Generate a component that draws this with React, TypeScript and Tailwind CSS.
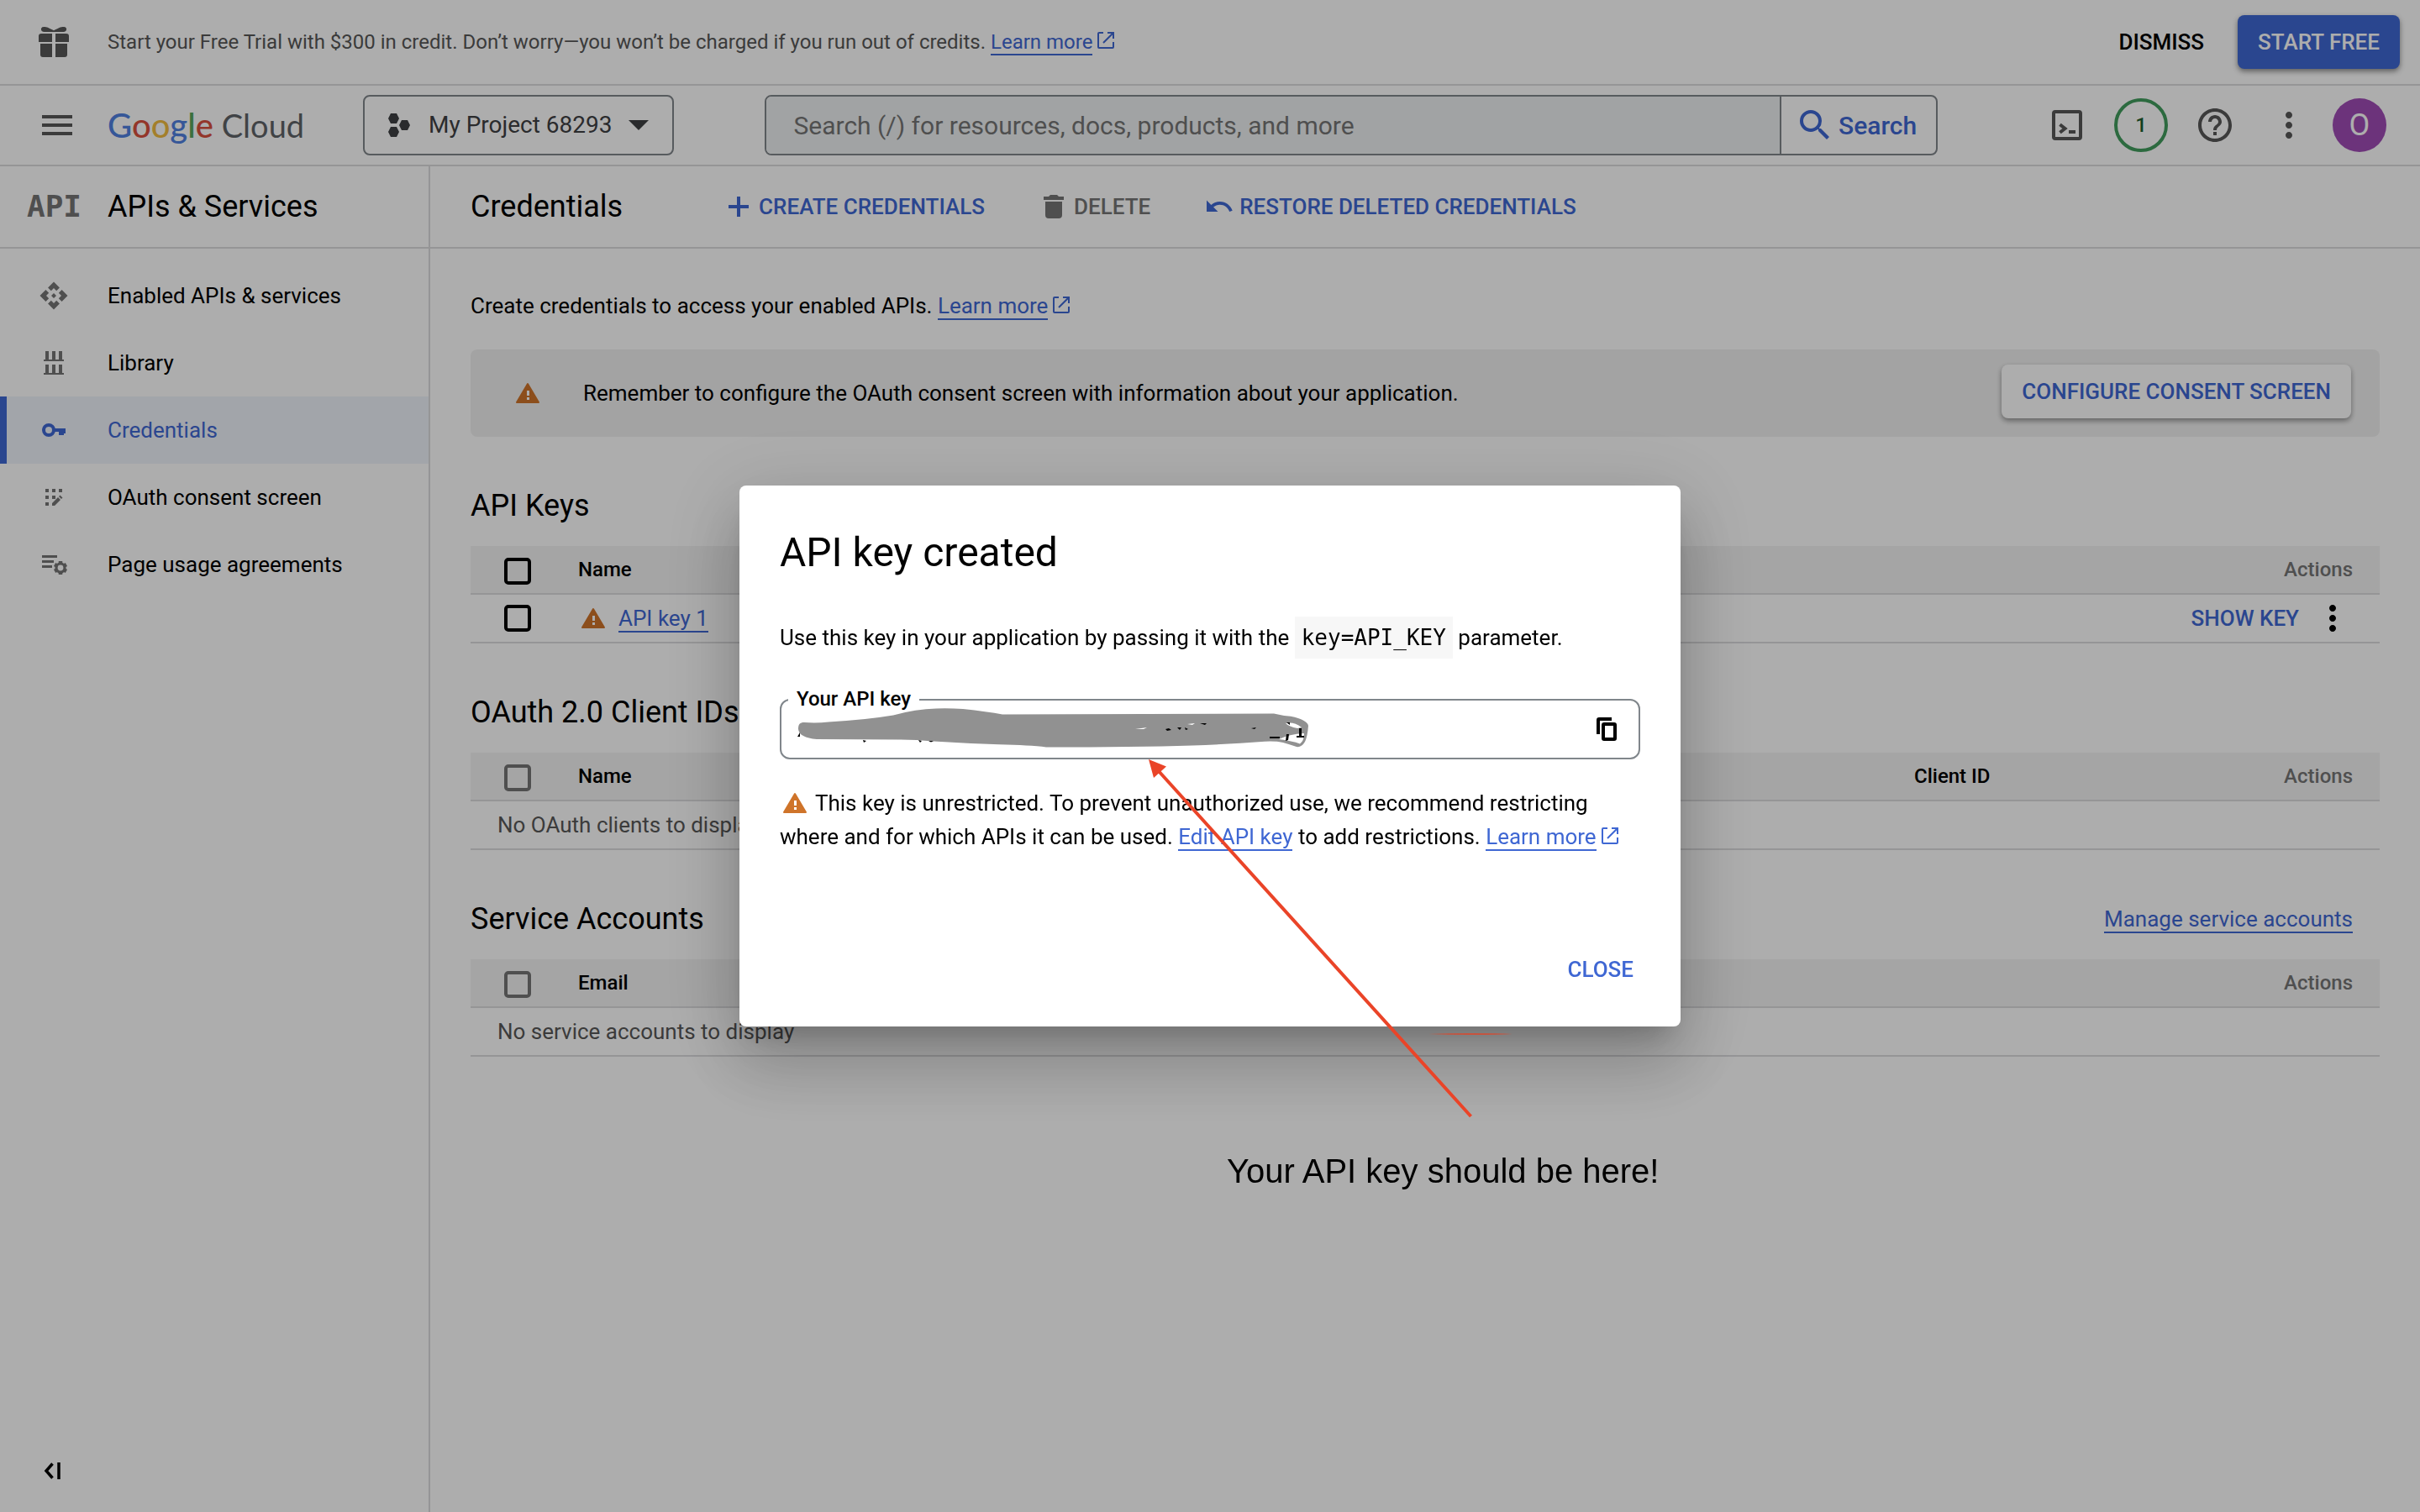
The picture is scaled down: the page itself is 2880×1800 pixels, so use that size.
import React from 'react';
import { MdApi, MdHelpOutline, MdMenu, MdMoreVert, MdSearch, MdUndo } from 'react-icons/md';

function GiftIcon() {
  return (
    <svg viewBox="0 0 48 48" className="size-12 shrink-0 fill-[#575757]" aria-hidden="true">
      <path d="M12 6c4 0 6.500 1.500 12 4.200C29.500 7.500 32 6 36 6c2.500 0 3.500 2 3 3.500-.4 1.500-1.500 2.500-3.500 2.500h-23C10.500 12 9.400 11 9 9.500 8.500 8 9.500 6 12 6z" />
      <path d="M6 17a3 3 0 0 1 3-3h13v10H6zM26 14h13a3 3 0 0 1 3 3v7H26zM8 26h14v16H11a3 3 0 0 1-3-3zM26 26h14v13a3 3 0 0 1-3 3H26z" />
    </svg>
  );
}

function HexIcon() {
  return (
    <svg viewBox="0 0 26 28" className="h-7 w-[26px] fill-[#3e4043]" aria-hidden="true">
      <path d="M3 0h7l3 6-3 6H3L0 6zM3 16h7l3 6-3 6H3l-3-6zM16 8h7l3 6-3 6h-7l-3-6z" />
    </svg>
  );
}

function TerminalIcon() {
  return (
    <svg viewBox="0 0 36 36" className="size-9" fill="none" stroke="#575757" strokeWidth="4" aria-hidden="true">
      <rect x="2" y="2" width="32" height="32" rx="2" />
      <path d="M9.500 17.200l6 4.800-6 4.800M20 26h8" />
    </svg>
  );
}

function PlusIcon() {
  return (
    <svg viewBox="0 0 18 18" className="size-9 fill-current" aria-hidden="true">
      <path d="M8 3h2v5h5v2h-5v5H8v-5H3V8h5z" />
    </svg>
  );
}

function TrashIcon() {
  return (
    <svg viewBox="0 0 36 36" className="size-9 fill-current" aria-hidden="true">
      <path d="M6 6h6l2-2h8l2 2h6v4H6zM8 12h20v16a4 4 0 0 1-4 4H12a4 4 0 0 1-4-4z" />
    </svg>
  );
}

function LibraryIcon() {
  return (
    <svg viewBox="0 0 36 36" className="size-9 fill-current" aria-hidden="true">
      <path d="M8 4h4v10h4V4h4v10h4V4h4v10h2v2H6v-2h2zM8 20h4v10h4V20h4v10h4V20h4v10h2v2H6v-2h2z" />
    </svg>
  );
}

function KeyIcon() {
  return (
    <svg viewBox="0 0 36 36" className="size-9 fill-current" aria-hidden="true">
      <circle cx="12" cy="18" r="6" fill="none" stroke="currentColor" strokeWidth="4" />
      <path d="M19 16h13v6h-2v2h-6v-4h-5z" />
    </svg>
  );
}

function ConsentIcon() {
  return (
    <svg viewBox="0 0 36 36" className="size-9 fill-current" aria-hidden="true">
      <path d="M8 8h4v4H8zM16 8h4v4h-4zM24 8h4v4h-4zM8 16h4v4H8zM16 16h4v4h-4zM8 24h4v4H8z" />
      <path d="M16 28v-3l7-7 3 3-7 7zM24 17l1.500-1.500 3 3L27 20z" />
    </svg>
  );
}

function AgreementsIcon() {
  return (
    <svg viewBox="0 0 36 36" className="size-9 fill-current" aria-hidden="true">
      <path d="M4 7h18v3H4zM4 13h14v3H4zM4 19h12v3H4z" />
      <circle cx="26" cy="22" r="5" fill="none" stroke="currentColor" strokeWidth="3.200" />
      <g stroke="currentColor" strokeWidth="4.500">
        <path d="M26 17v-3M26 27v3" />
        <path d="M26 17v-3M26 27v3" transform="rotate(60 26 22)" />
        <path d="M26 17v-3M26 27v3" transform="rotate(120 26 22)" />
      </g>
    </svg>
  );
}

function WarningIcon({ className }: { className: string }) {
  return (
    <svg viewBox="0 0 36 36" className={className} aria-hidden="true">
      <path d="M18 7L31 29H5z" fill="#cf742a" stroke="#cf742a" strokeWidth="2" strokeLinejoin="round" />
      <path d="M17 15h3v6h-3zM17 23h3v3h-3z" fill="#fff" />
    </svg>
  );
}

function CopyIcon() {
  return (
    <svg viewBox="0 0 24 28" className="h-7 w-6" fill="none" stroke="#000" strokeWidth="4" aria-hidden="true">
      <path d="M2 20V3a1 1 0 0 1 1-1h15" />
      <rect x="8" y="8" width="14" height="18" rx="1" />
    </svg>
  );
}

function ExternalIcon() {
  return (
    <svg viewBox="0 0 20 20" className="ml-[6px] inline-block size-5 align-baseline" fill="none" stroke="#3f67d3" strokeWidth="2" aria-hidden="true">
      <path d="M7 1H2a1 1 0 0 0-1 1v16a1 1 0 0 0 1 1h16a1 1 0 0 0 1-1v-6M12 1h7v7M7 13L19 1" />
    </svg>
  );
}

function TextLink({ children, external }: { children: React.ReactNode; external?: boolean }) {
  return (
    <a href="#" className="whitespace-nowrap text-[#3f67d3]">
      <span className="border-b-2 border-[#3f67d3]">{children}</span>
      {external && <ExternalIcon />}
    </a>
  );
}

function TrialBanner() {
  return (
    <div className="flex h-[102px] items-center border-b-2 border-[#dcdcde] pr-6 pl-10">
      <GiftIcon />
      <p className="ml-10 flex-1 text-2xl text-[#575757]">
        Start your Free Trial with $300 in credit. Don’t worry—you won’t be charged if you run out of credits.{' '}
        <TextLink external>Learn more</TextLink>
      </p>
      <button type="button" className="px-10 font-medium">DISMISS</button>
      <button type="button" className="h-16 rounded-lg bg-[#3f67d3] px-6 font-medium text-white shadow-[0_3px_6px_rgba(0,0,0,0.45)]">
        START FREE
      </button>
    </div>
  );
}

function Header() {
  return (
    <header className="flex h-24 items-center border-b-2 border-[#dcdcde] pr-10 pl-11">
      <button type="button" aria-label="Main menu"><MdMenu className="size-12 text-[#575757]" /></button>
      <a href="#" className="ml-9 w-[304px] font-[Lato] text-[40px] leading-[48px] whitespace-nowrap" aria-label="Google Cloud">
        <span className="font-medium">
          <span className="text-[#5080e0]">G</span>
          <span className="text-[#d9503f]">o</span>
          <span className="text-[#f0bb40]">o</span>
          <span className="text-[#5080e0]">g</span>
          <span className="text-[#58a55c]">l</span>
          <span className="text-[#d9503f]">e</span>
        </span>
        <span className="text-[38px] text-[#5f6368]"> Cloud</span>
      </a>
      <button type="button" className="flex h-[72px] items-center rounded-lg border-2 border-[#80868b] px-7 text-[28px] text-[#3e4043]">
        <HexIcon />
        <span className="ml-[22px] whitespace-nowrap">My Project 68293</span>
        <svg viewBox="0 0 24 12" className="ml-5 h-3 w-6 fill-current" aria-hidden="true"><path d="M0 0h24L12 12z" /></svg>
      </button>
      <form role="search" className="mr-[122px] ml-[108px] flex h-[72px] flex-1 overflow-hidden rounded-lg border-2 border-[#80868b]">
        <input
          type="search"
          aria-label="Search"
          placeholder="Search (/) for resources, docs, products, and more"
          className="min-w-0 flex-1 border-r-2 border-[#80868b] bg-[#eef1f2] px-8 text-[30px] placeholder:text-[#757575]"
        />
        <button type="button" className="flex w-[184px] items-center pl-4 text-[30px] font-medium text-[#3f67d3]">
          <MdSearch className="mr-1 size-12" />
          Search
        </button>
      </form>
      <div className="flex items-center gap-5">
        <div className="flex items-center gap-6 text-[#575757]">
          <button type="button" aria-label="Cloud Shell" className="flex w-16 justify-center"><TerminalIcon /></button>
          <button type="button" aria-label="Notifications" className="size-16 rounded-full border-4 border-[#429d5e] text-2xl font-medium text-[#1d5c2e]">1</button>
          <button type="button" aria-label="Help" className="flex w-16 justify-center"><MdHelpOutline className="size-12" /></button>
          <button type="button" aria-label="More" className="flex w-16 justify-center"><MdMoreVert className="size-12" /></button>
        </div>
        <button type="button" aria-label="Account" className="size-16 rounded-full bg-[#9f4cb5] text-4xl text-white">O</button>
      </div>
    </header>
  );
}

const navItems = [
  { label: 'Enabled APIs & services', icon: <MdApi className="size-9" /> },
  { label: 'Library', icon: <LibraryIcon /> },
  { label: 'Credentials', icon: <KeyIcon />, active: true },
  { label: 'OAuth consent screen', icon: <ConsentIcon /> },
  { label: 'Page usage agreements', icon: <AgreementsIcon /> },
];

function Sidebar() {
  return (
    <aside className="flex w-[512px] shrink-0 flex-col border-r-2 border-[#dcdcde]">
      <div className="flex h-[98px] items-center border-b-2 border-[#dcdcde] pl-8">
        <span className="w-24 font-['DejaVu_Sans_Mono'] text-4xl font-bold text-[#757575]">API</span>
        <h2 className="text-4xl">APIs &amp; Services</h2>
      </div>
      <nav className="pt-4">
        {navItems.map((item) => (
          <a
            key={item.label}
            href="#"
            className={
              item.active
                ? 'flex h-20 items-center border-l-8 border-[#3f67d3] bg-[#eff3fb] pl-[38px] text-[#3f67d3]'
                : 'flex h-20 items-center pl-[46px]'
            }
          >
            <span className={item.active ? 'mr-[46px]' : 'mr-[46px] text-[#757575]'}>{item.icon}</span>
            {item.label}
          </a>
        ))}
      </nav>
      <button type="button" aria-label="Collapse menu" className="mt-auto mb-8 ml-[52px] flex h-[34px] w-6 items-center">
        <svg viewBox="0 0 20 20" className="size-5" fill="none" stroke="#000" strokeWidth="3.500" aria-hidden="true">
          <path d="M10.500 1.500L3 10l7.500 8.500M18 0v20" />
        </svg>
      </button>
    </aside>
  );
}

function Tick({ label, dim }: { label: string; dim?: boolean }) {
  return (
    <input
      type="checkbox"
      aria-label={label}
      disabled={dim}
      className={
        dim
          ? 'block size-8 appearance-none rounded-[5px] border-4 border-[#757575]'
          : 'block size-8 appearance-none rounded-[5px] border-4 border-black'
      }
    />
  );
}

function SectionHead({ title, children }: { title: string; children?: React.ReactNode }) {
  return (
    <div className="mt-[62px] mb-7 flex h-10 items-center justify-between pr-8">
      <h2 className="text-4xl">{title}</h2>
      {children}
    </div>
  );
}

const headCell = 'h-[58px] border-b-2 border-[#dcdcde] text-left text-2xl font-medium';
const bodyCell = 'h-[58px] border-b-2 border-[#dcdcde]';
const tableClass = 'w-full table-fixed border-separate border-spacing-0';

function EmptyTable({ column, extra, message }: { column: string; extra?: string; message: string }) {
  return (
    <table className={tableClass}>
      <thead className="bg-[#f3f3f3]">
        <tr>
          <th className={`${headCell} w-32 pt-1 pl-10`}><Tick label="Select all" dim /></th>
          <th className={headCell}>{column}</th>
          {extra && <th className={`${headCell} w-[354px]`}>{extra}</th>}
          <th className={`${headCell} w-[200px] pr-8`}><div className="text-right text-[#757575]">Actions</div></th>
        </tr>
      </thead>
      <tbody>
        <tr><td colSpan={extra ? 4 : 3} className={`${bodyCell} pl-8 text-[#575757]`}>{message}</td></tr>
      </tbody>
    </table>
  );
}

function Credentials() {
  return (
    <main className="min-w-0 flex-1">
      <div className="flex h-[98px] items-center gap-16 border-b-2 border-[#dcdcde] pl-12 font-medium text-[#3f67d3]">
        <h1 className="mr-14 text-4xl font-normal text-black">Credentials</h1>
        <button type="button" className="flex items-center gap-1.5"><PlusIcon />CREATE CREDENTIALS</button>
        <button type="button" className="flex items-center gap-1.5 text-[#757575]"><TrashIcon />DELETE</button>
        <button type="button" className="flex items-center gap-1.5"><MdUndo className="size-9" />RESTORE DELETED CREDENTIALS</button>
      </div>
      <div className="px-12 pt-12">
        <p className="leading-10">
          Create credentials to access your enabled APIs. <TextLink external>Learn more</TextLink>
        </p>
        <div className="mt-8 flex h-[104px] items-center rounded-lg bg-[#f1f1f1] pr-[34px] pl-[50px]">
          <WarningIcon className="size-9" />
          <p className="ml-12 flex-1">Remember to configure the OAuth consent screen with information about your application.</p>
          <button type="button" className="mb-1 h-16 rounded-lg bg-white px-6 font-medium text-[#3f67d3] shadow-[0_3px_6px_rgba(0,0,0,0.4)]">
            CONFIGURE CONSENT SCREEN
          </button>
        </div>

        <SectionHead title="API Keys" />
        <table className={tableClass}>
          <thead className="bg-[#f3f3f3]">
            <tr>
              <th className={`${headCell} w-32 pt-1 pl-10`}><Tick label="Select all keys" /></th>
              <th className={headCell}>Name</th>
              <th className={`${headCell} w-[300px] pr-8`}><div className="text-right text-[#757575]">Actions</div></th>
            </tr>
          </thead>
          <tbody>
            <tr>
              <td className={`${bodyCell} pl-10`}><Tick label="Select API key 1" /></td>
              <td className={bodyCell}>
                <div className="flex items-center gap-3">
                  <WarningIcon className="size-9" />
                  <TextLink>API key 1</TextLink>
                </div>
              </td>
              <td className={`${bodyCell} pr-8`}>
                <div className="flex items-center justify-end gap-4">
                  <button type="button" className="font-medium text-[#3f67d3]">SHOW KEY</button>
                  <button type="button" aria-label="More actions"><MdMoreVert className="size-12" /></button>
                </div>
              </td>
            </tr>
          </tbody>
        </table>

        <SectionHead title="OAuth 2.0 Client IDs" />
        <EmptyTable column="Name" extra="Client ID" message="No OAuth clients to display" />

        <SectionHead title="Service Accounts"><TextLink>Manage service accounts</TextLink></SectionHead>
        <EmptyTable column="Email" message="No service accounts to display" />
      </div>
    </main>
  );
}

function Redaction() {
  return (
    <svg viewBox="940 836 624 60" className="pointer-events-none absolute top-[3px] left-[10px] h-[60px] w-[624px]" aria-hidden="true">
      <path
        fill="#919191"
        d="M950 867C950 861 952 859 957 859Q972 860 986 858.500Q1030 856 1063 850.500Q1090 843 1114 842.500Q1130 842 1146 843Q1175 846 1193 849.500L1516 848.500Q1526 851 1536 851.700Q1556 856 1557 863Q1556 876 1553 882Q1549 889 1543 888Q1534 885 1527 883Q1518 881 1505 881.700Q1460 885 1419 886.500Q1350 888.500 1245 888.500Q1225 886 1189 885.300Q1150 884 1111 881.500Q1090 879.500 1072 879.500L972 879Q951 877 950 867z"
      />
      <path fill="#fff" d="M1530 860Q1540 858 1549 865L1544 866Q1534 864 1530 860zM1522 879Q1534 873 1552 872Q1552 881 1547 884.500Q1538 881 1522 879zM1351 867l14-2-4 2zM1413 861l9-1-3 2z" />
      <g fill="#000">
        <path d="M949 876l3-5v5zM1027 880l4 1-3 2zM1093 880l4 1-2 2zM1105 881l6 0-3 1.500zM1543 875h9v2h-9zM1546 866h3v9h-3zM1511 876h12v2h-12zM1531 873h3l-1 7-3 1z" />
        <path d="M1387 867l4-1 3 2-5 1zM1401 865l5 0-2 3zM1410 865l4 2-3 1zM1428 860l8 0-2 2zM1489 866l6-1-2 2zM1531 859h4v3z" />
      </g>
    </svg>
  );
}

function Annotations() {
  return (
    <>
      <svg viewBox="480 320 400 440" className="pointer-events-none absolute top-[320px] left-[480px] h-[440px] w-[400px]" aria-hidden="true">
        <path d="M498 339L870.500 751" stroke="#ea4428" strokeWidth="4" />
        <path d="M487 326l21 8.500-15 13.500z" fill="#ea4428" />
      </svg>
      <svg viewBox="0 0 100 4" className="pointer-events-none absolute top-[651px] left-[820px] h-1 w-[100px]" aria-hidden="true">
        <path d="M0 2Q50 0 100 2Q50 4 0 2z" fill="#c9523c" />
      </svg>
      <p className="pointer-events-none absolute top-[792px] left-[580px] font-['Liberation_Sans'] text-[40px] leading-[48px] whitespace-nowrap">
        Your API key should be here!
      </p>
    </>
  );
}

function KeyDialog() {
  return (
    <div className="fixed inset-0 flex items-center justify-center bg-black/32">
      <div
        role="dialog"
        aria-modal="true"
        aria-labelledby="dialog-title"
        className="relative w-[1120px] rounded-lg bg-white p-12 shadow-[0_22px_30px_-14px_rgba(0,0,0,0.2),0_48px_76px_6px_rgba(0,0,0,0.14),0_18px_92px_16px_rgba(0,0,0,0.12)]"
      >
        <h2 id="dialog-title" className="text-5xl leading-[64px]">API key created</h2>
        <p className="mt-11 leading-[50px]">
          Use this key in your application by passing it with the{' '}
          <code className="bg-[#f7f7f7] px-2 py-[10px] font-['DejaVu_Sans_Mono']">key=API_KEY</code> parameter.
        </p>
        <div className="relative mt-12 flex h-[72px] items-center rounded-xl border-2 border-[#80868b] pr-[26px]">
          <label htmlFor="api-key" className="absolute -top-4 left-2 bg-white px-[10px] text-2xl leading-7 font-medium">
            Your API key
          </label>
          <input id="api-key" type="text" readOnly className="h-full min-w-0 flex-1 bg-transparent px-5 outline-none" />
          <button type="button" aria-label="Copy to clipboard"><CopyIcon /></button>
          <Redaction />
        </div>
        <p className="mt-8 leading-10">
          <WarningIcon className="inline-block size-9 align-[-9px]" /> This key is unrestricted. To prevent unauthorized use, we recommend restricting
          where and for which APIs it can be used. <TextLink>Edit API key</TextLink> to add restrictions.{' '}
          <TextLink external>Learn more</TextLink>
        </p>
        <div className="mt-[118px] flex justify-end">
          <button type="button" className="h-10 px-2 font-medium text-[#3f67d3]">CLOSE</button>
        </div>
        <Annotations />
      </div>
    </div>
  );
}

export default function App() {
  return (
    <div className="flex min-h-screen flex-col bg-white font-[Roboto,sans-serif] text-[26px] text-black">
      <TrialBanner />
      <Header />
      <div className="flex flex-1">
        <Sidebar />
        <Credentials />
      </div>
      <KeyDialog />
    </div>
  );
}
